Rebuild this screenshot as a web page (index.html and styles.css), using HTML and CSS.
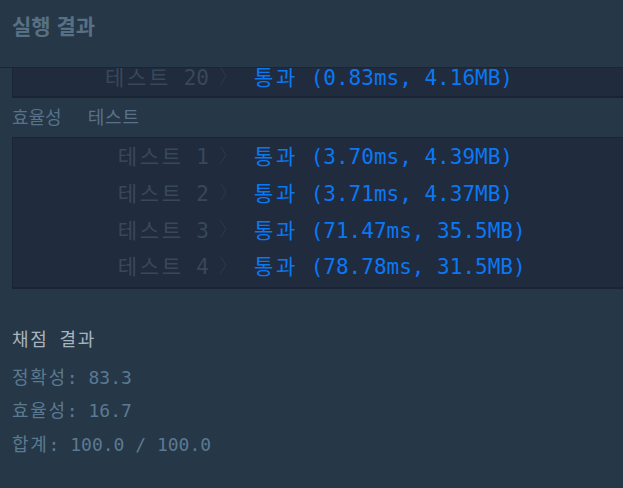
FILE: index.html
```html
<!DOCTYPE html>
<html lang="ko">
<head>
<meta charset="utf-8">
<title>실행 결과</title>
<link rel="stylesheet" href="styles.css">
</head>
<body>
<div class="app">
  <header class="header">
    <h1 class="title">실행 결과</h1>
  </header>
  <main class="main">
    <div class="box box-scrolled">
      <div class="row">
        <span class="label"><span class="ko">테스트</span> 20</span>
        <svg class="chev" width="7" height="18" viewBox="0 0 7 18"><polyline points="0.5,0.5 6,9 0.5,17.5" fill="none" stroke="#2e3b4d" stroke-width="1"/></svg>
        <span class="res"><span class="ko">통과</span> (0.83ms, 4.16MB)</span>
      </div>
    </div>

    <div class="section-label"><span>효율성</span><span class="sub">테스트</span></div>

    <div class="box">
      <div class="row">
        <span class="label"><span class="ko">테스트</span> 1</span>
        <svg class="chev" width="7" height="18" viewBox="0 0 7 18"><polyline points="0.5,0.5 6,9 0.5,17.5" fill="none" stroke="#2e3b4d" stroke-width="1"/></svg>
        <span class="res"><span class="ko">통과</span> (3.70ms, 4.39MB)</span>
      </div>
      <div class="row">
        <span class="label"><span class="ko">테스트</span> 2</span>
        <svg class="chev" width="7" height="18" viewBox="0 0 7 18"><polyline points="0.5,0.5 6,9 0.5,17.5" fill="none" stroke="#2e3b4d" stroke-width="1"/></svg>
        <span class="res"><span class="ko">통과</span> (3.71ms, 4.37MB)</span>
      </div>
      <div class="row">
        <span class="label"><span class="ko">테스트</span> 3</span>
        <svg class="chev" width="7" height="18" viewBox="0 0 7 18"><polyline points="0.5,0.5 6,9 0.5,17.5" fill="none" stroke="#2e3b4d" stroke-width="1"/></svg>
        <span class="res"><span class="ko">통과</span> (71.47ms, 35.5MB)</span>
      </div>
      <div class="row">
        <span class="label"><span class="ko">테스트</span> 4</span>
        <svg class="chev" width="7" height="18" viewBox="0 0 7 18"><polyline points="0.5,0.5 6,9 0.5,17.5" fill="none" stroke="#2e3b4d" stroke-width="1"/></svg>
        <span class="res"><span class="ko">통과</span> (78.78ms, 31.5MB)</span>
      </div>
    </div>

    <section class="score">
      <div class="score-title"><span class="ko-s">채점</span> <span class="ko-s">결과</span></div>
      <div class="score-line"><span class="ko-s">정확성</span>: 83.3</div>
      <div class="score-line"><span class="ko-s">효율성</span>: 16.7</div>
      <div class="score-line"><span class="ko-s">합계</span>: 100.0 / 100.0</div>
    </section>
  </main>
</div>
</body>
</html>
```

FILE: styles.css
```css
* { box-sizing: border-box; }

html, body {
  margin: 0;
  padding: 0;
  background: #263747;
}

body {
  width: 623px;
  height: 488px;
  overflow: hidden;
  font-family: "DejaVu Sans Mono", "Noto Sans CJK KR", monospace;
}

.app {
  display: flex;
  flex-direction: column;
  height: 488px;
}

.header {
  flex: 0 0 68px;
  height: 68px;
  background: #263747;
  border-bottom: 1px solid #1b2633;
  padding: 10px 12px 0;
  position: relative;
  z-index: 2;
}

.title {
  margin: 0;
  font-family: "Noto Sans CJK KR", sans-serif;
  font-size: 21px;
  font-weight: 700;
  line-height: 30px;
  color: #587084;
}

.main {
  flex: 1;
  overflow: hidden;
  padding-left: 12px;
  display: flex;
  flex-direction: column;
}

.box {
  background: #202b3d;
  border-top: 1px solid #1a2433;
  border-left: 1px solid #1a2433;
  border-bottom: 2px solid #1a2433;
  padding: 1px 0;
  margin-right: -4px;
}

/* scroll offset: the top of the first list is hidden under the header */
.box-scrolled {
  margin-top: -11px;
}

.row {
  display: flex;
  align-items: center;
  height: 36.67px;
  padding-bottom: 4px;
  font-size: 21px;
  white-space: nowrap;
}

.box-scrolled .row {
  height: 36px;
  padding-bottom: 3px;
}

.ko { letter-spacing: 2.7px; }
.ko-s { letter-spacing: 1.7px; }

.label {
  flex: 0 0 196px;
  text-align: right;
  color: #38485b;
}

.chev {
  flex: 0 0 7px;
  margin-left: 11px;
  display: block;
}

.res {
  margin-left: 27px;
  color: #0a78f5;
}

.section-label {
  height: 39px;
  line-height: 39px;
  font-size: 18px;
  color: #58728a;
  white-space: nowrap;
}

.section-label .sub {
  margin-left: 26px;
  letter-spacing: 0.8px;
}

.score {
  padding-top: 34px;
}

.score-title {
  height: 34px;
  line-height: 34px;
  font-size: 18px;
  color: #a7b4c0;
  margin-bottom: 4px;
  white-space: nowrap;
}

.score-line {
  height: 33.5px;
  line-height: 33.5px;
  font-size: 18px;
  color: #5b7a92;
  white-space: nowrap;
}
```
